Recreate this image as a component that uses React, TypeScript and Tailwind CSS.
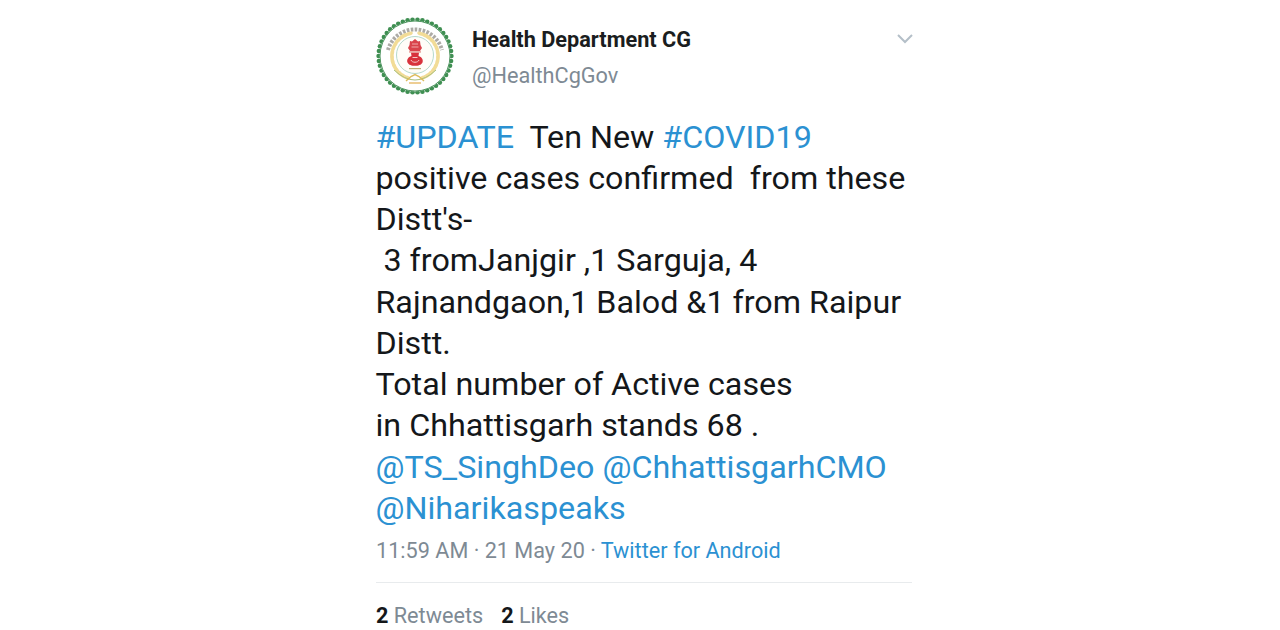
import React from "react";

function Logo() {
  const n = 46;
  const beads = Array.from({ length: n }, (_, i) => {
    const a = (i / n) * Math.PI * 2;
    return { x: 39 + Math.cos(a) * 36.4, y: 39 + Math.sin(a) * 36.4, k: i };
  });
  const wheat = Array.from({ length: 14 }, (_, i) => {
    const a = Math.PI * (0.5 + 0.08 + i * 0.062);
    return { x: 39 + Math.cos(a) * 23, y: 39 - Math.sin(a) * 23, d: (a * 180) / Math.PI };
  });
  return (
    <svg width="78" height="78" viewBox="0 0 78 78" className="shrink-0">
      {beads.map((b) => (
        <circle key={b.k} cx={b.x} cy={b.y} r="2.3" fill="#3f8f52" />
      ))}
      <circle cx="39" cy="39" r="35.2" fill="#fff" />
      <circle cx="39" cy="39" r="35" fill="none" stroke="#4f9560" strokeWidth="1" />
      <path d="M12 33 A28 28 0 0 1 66 33" fill="none" stroke="#77736a" strokeWidth="4" strokeDasharray="2.6 1.4" opacity="0.6" />
      {wheat.map((w, i) => (
        <g key={i}>
          <ellipse cx={w.x} cy={w.y} rx="3.6" ry="1.9" fill="#f2dc97" transform={`rotate(${90 - w.d} ${w.x} ${w.y})`} />
          <ellipse cx={78 - w.x} cy={w.y} rx="3.6" ry="1.9" fill="#f2dc97" transform={`rotate(${w.d - 90} ${78 - w.x} ${w.y})`} />
        </g>
      ))}
      <path d="M18 53 Q39 73 60 53" fill="none" stroke="#a8c07e" strokeWidth="1" />
      <circle cx="39" cy="38" r="18.5" fill="#fffdf8" stroke="#b5d9cc" strokeWidth="1" />
      <path d="M36 24.5 L39 22 L42 24.5 L44 24 L44.5 28 L46 31 L44 34 H34 L32 31 L33.5 28 L34 24 Z" fill="#d9434b" />
      <path d="M36 27 H42 M35.5 30 H42.5" stroke="#f3b5b3" strokeWidth="0.9" />
      <rect x="33" y="34" width="12" height="1.8" fill="#e9aca6" />
      <path d="M35 35.8 H43 L42.5 39 C46 40 47.5 43 46.5 45.5 C45.5 48 42 48.8 39 48.8 C36 48.8 32.5 48 31.5 45.5 C30.5 43 32 40 35.5 39 Z" fill="#d8323c" />
      <path d="M35 43 C36 46 42 46 43 43 M36.5 40.5 H41.5" fill="none" stroke="#f5c9c7" strokeWidth="1" />
      <rect x="33" y="51" width="12" height="1.2" fill="#bdae75" />
      <path d="M30 64 L35 59.5 L39 57.5 L43 59.5 L48 64" fill="none" stroke="#ddbb5c" strokeWidth="1.4" />
      <path d="M33 66 H45" stroke="#e3ad4c" strokeWidth="1.2" />
    </svg>
  );
}

export default function App() {
  const link = "text-[#2b91d2]";
  return (
    <div className="w-[1280px] h-[630px] overflow-hidden bg-white flex justify-center font-['Roboto',sans-serif]">
      <div className="w-[536px] ml-[8px] pt-[17px] flex flex-col">
        <div className="flex items-start">
          <Logo />
          <div className="ml-[18px] flex-1 pt-[9px]">
            <div className="text-[21.7px] leading-[28px] font-bold text-[#1a1d20]">Health Department CG</div>
            <div className="mt-[8px] text-[21.7px] leading-[28px] text-[#7e8a94]">@HealthCgGov</div>
          </div>
          <svg width="18" height="12" viewBox="0 0 18 12" className="mt-[16px] mr-[-2px]" fill="none" stroke="#b4bfc8" strokeWidth="2">
            <path d="M2 2 L9 9 L16 2" />
          </svg>
        </div>
        <div className="mt-[21.5px] -ml-[0.5px] text-[32.25px] leading-[41.25px] text-[#14171a] whitespace-pre">
          <div><span className={link}>#UPDATE</span>{"  Ten New "}<span className={link}>#COVID19</span></div>
          <div>{"positive cases confirmed  from these"}</div>
          <div>{"Distt's-"}</div>
          <div>{" 3 fromJanjgir ,1 Sarguja, 4"}</div>
          <div>{"Rajnandgaon,1 Balod &1 from Raipur"}</div>
          <div>{"Distt."}</div>
          <div>{"Total number of Active cases"}</div>
          <div>{"in Chhattisgarh stands 68 ."}</div>
          <div className={link}>{"@TS_SinghDeo @ChhattisgarhCMO"}</div>
          <div className={link}>{"@Niharikaspeaks"}</div>
        </div>
        <div className="mt-[7.5px] text-[21.65px] leading-[28px] text-[#7e8a94]">
          11:59 AM · 21 May 20 · <span className={link}>Twitter for Android</span>
        </div>
        <div className="mt-[17px] h-[1px] bg-[#e8ebed]" />
        <div className="mt-[19px] text-[21.65px] leading-[28px] text-[#7e8a94] flex gap-[18px]">
          <span><b className="text-[#14171a] font-bold">2</b> Retweets</span>
          <span><b className="text-[#14171a] font-bold">2</b> Likes</span>
        </div>
      </div>
    </div>
  );
}
